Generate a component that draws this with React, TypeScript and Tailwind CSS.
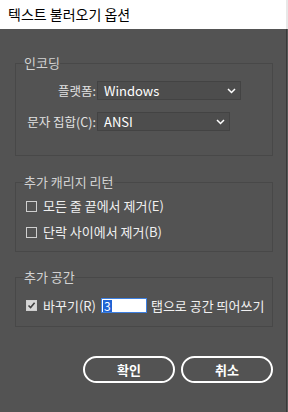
import React from "react";

const font = { fontFamily: "'Noto Sans CJK KR', 'Noto Sans', sans-serif" };

function Chevron() {
  return (
    <svg width="9" height="6" viewBox="0 0 9 6" className="shrink-0">
      <path d="M1 1 L4.5 4.5 L8 1" stroke="#ffffff" strokeWidth="1.5" fill="none" />
    </svg>
  );
}

function Select({ value, width }: { value: string; width: string }) {
  return (
    <div
      className={`${width} h-[19px] flex items-center justify-between pl-[6px] pr-[4px] bg-[#4d4d4d] border border-[#434343] text-white text-[13px] leading-none`}
    >
      <span>{value}</span>
      <Chevron />
    </div>
  );
}

function Check({ checked }: { checked?: boolean }) {
  return (
    <div
      className={`w-[11px] h-[11px] border border-[#cfcfcf] flex items-center justify-center shrink-0 ${
        checked ? "bg-[#d6d6d6]" : ""
      }`}
    >
      {checked && (
        <svg width="9" height="9" viewBox="0 0 9 9">
          <path d="M1.5 4.5 L3.6 6.6 L7.6 1.8" stroke="#3f3f3f" strokeWidth="1.6" fill="none" />
        </svg>
      )}
    </div>
  );
}

function Legend({ children }: { children: React.ReactNode }) {
  return (
    <legend className="ml-[8px] px-0 text-[13px] leading-[14px] text-[#d2d2d2]">{children}</legend>
  );
}

export default function App() {
  return (
    <div className="w-[288px] h-[412px] flex overflow-hidden" style={font}>
      <div className="w-[286px] flex flex-col">
        <div className="h-[29px] bg-white flex items-center pl-[8px] text-[14px] text-black shrink-0">
          텍스트 불러오기 옵션
        </div>
        <div className="flex-1 bg-[#535353] flex flex-col pl-[15px] pt-[27px]">
          <fieldset className="w-[258px] border border-[#484848] pb-[24px]">
            <Legend>인코딩</Legend>
            <div className="flex flex-col gap-[12px] mt-[11px]">
              <div className="flex items-center">
                <div className="w-[81px] text-right pr-[1px] text-[12.5px] leading-[16px] text-[#e2e2e2]">플랫폼:</div>
                <Select value="Windows" width="w-[144px]" />
              </div>
              <div className="flex items-center">
                <div className="w-[81px] text-right pr-[1px] text-[12.5px] leading-[16px] text-[#e2e2e2]">문자 집합(C):</div>
                <Select value="ANSI" width="w-[133px]" />
              </div>
            </div>
          </fieldset>

          <fieldset className="w-[258px] border border-[#484848] pb-[11px] mt-[19px]">
            <Legend>추가 캐리지 리턴</Legend>
            <div className="flex flex-col gap-[10px] mt-[9px] pl-[10px]">
              <div className="flex items-center h-[16px] gap-[6px] text-[13px] leading-[16px] text-[#f0f0f0]">
                <Check />
                <span>모든 줄 끝에서 제거(E)</span>
              </div>
              <div className="flex items-center h-[16px] gap-[6px] text-[13px] leading-[16px] text-[#f0f0f0]">
                <Check />
                <span>단락 사이에서 제거(B)</span>
              </div>
            </div>
          </fieldset>

          <fieldset className="w-[258px] border border-[#484848] pb-[12px] mt-[18px]">
            <Legend>추가 공간</Legend>
            <div className="flex items-center h-[17px] mt-[13px] pl-[10px] text-[13px] leading-[16px] text-[#f0f0f0]">
              <Check checked />
              <span className="ml-[6px]">바꾸기(R)</span>
              <div className="ml-[5px] w-[46px] h-[15px] bg-white border border-[#3d7fe0] flex items-center pl-[1px]">
                <span className="bg-[#1f63d4] text-white text-[12px] leading-[12px] px-[1px]">3</span>
              </div>
              <span className="ml-[4px]">탭으로 공간 띄어쓰기</span>
            </div>
          </fieldset>

          <div className="flex gap-[6px] mt-[29px] ml-[68px]">
            <div className="w-[92px] h-[27px] rounded-full border-2 border-white flex items-center justify-center text-white text-[13px] font-bold">
              확인
            </div>
            <div className="w-[92px] h-[27px] rounded-full border-2 border-white flex items-center justify-center text-white text-[13px] font-bold">
              취소
            </div>
          </div>
        </div>
      </div>
      <div className="w-[2px] flex flex-col">
        <div className="h-[29px] bg-[#e8e8e8]" />
        <div className="flex-1 flex">
          <div className="w-[1px] bg-[#3a3a3a]" />
          <div className="w-[1px] bg-[#5a5a5a]" />
        </div>
      </div>
    </div>
  );
}
